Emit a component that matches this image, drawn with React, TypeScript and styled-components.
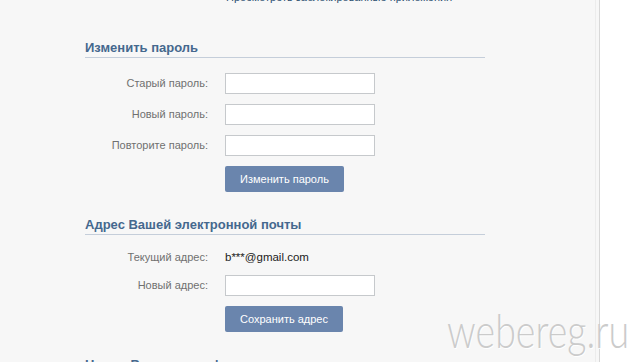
import React from "react";
import styled, { createGlobalStyle } from "styled-components";

const GlobalStyle = createGlobalStyle`
  html, body {
    margin: 0;
    padding: 0;
    height: 362px;
    overflow: hidden;
    background: #ffffff;
  }
  * { box-sizing: border-box; }
`;

const Page = styled.div`
  position: relative;
  display: flex;
  height: 362px;
  font-family: "Liberation Sans", Arial, sans-serif;
  font-size: 11px;
  color: #000;
`;

const Main = styled.main`
  width: 600px;
  flex-shrink: 0;
  background: #f7f7f7;
  border-right: 1px solid #d8d8d8;
  box-shadow: inset -3px 0 0 #f7f7f7, inset -4px 0 0 #ececec;
  padding-left: 85px;
  overflow: hidden;
`;

const Side = styled.aside`
  flex: 1;
  background: #ffffff;
`;

const Content = styled.div`
  width: 400px;
`;

const NoteRow = styled.div`
  display: flex;
  margin-top: -9px;
  line-height: 13px;
`;

const Spacer = styled.div`
  width: 140px;
  flex-shrink: 0;
`;

const NoteLink = styled.a`
  color: #2b4f70;
  text-decoration: none;
  padding-left: 1px;
`;

const Section = styled.section<{ $first?: boolean }>`
  margin-top: ${(p) => (p.$first ? "36px" : "25px")};
`;

const SectionTitle = styled.h2`
  margin: 0;
  font-size: 13px;
  font-weight: bold;
  line-height: 16px;
  color: #45688e;
  padding-bottom: 1px;
  border-bottom: 1px solid #c5ceda;
`;

const Fields = styled.div`
  display: flex;
  flex-direction: column;
  gap: 10px;
  margin-top: 15px;
`;

const Row = styled.div`
  display: flex;
  align-items: center;
  min-height: 15px;
`;

const Label = styled.label`
  width: 123px;
  margin-right: 17px;
  text-align: right;
  color: #707070;
  font-size: 11px;
  line-height: 15px;
  flex-shrink: 0;
`;

const Value = styled.span`
  font-size: 11.5px;
  line-height: 15px;
  color: #222;
`;

const Input = styled.input`
  width: 150px;
  height: 21px;
  margin: 0;
  padding: 2px 4px;
  border: 1px solid #c6c9cc;
  background: #ffffff;
  font-family: inherit;
  font-size: 11px;
  outline: none;
`;

const Button = styled.button`
  height: 26px;
  padding: 0 15px;
  margin: 0;
  border: none;
  border-radius: 2px;
  background: #6a85ad;
  color: #ffffff;
  font-family: "Liberation Sans", Arial, sans-serif;
  font-size: 11px;
  line-height: 26px;
  cursor: pointer;
`;

const Watermark = styled.div`
  position: absolute;
  left: 447px;
  top: 307px;
  font-family: Lato, "Open Sans", sans-serif;
  font-weight: 300;
  font-size: 47px;
  line-height: 46px;
  color: #cbcbcb;
  text-shadow: 1px 1px 0 #ffffff;
  white-space: nowrap;
  transform-origin: left top;
  transform: scaleX(0.8);
  pointer-events: none;
`;

type Field = { label: string; type?: string };

const passwordFields: Field[] = [
  { label: "Старый пароль:", type: "password" },
  { label: "Новый пароль:", type: "password" },
  { label: "Повторите пароль:", type: "password" },
];

export default function App() {
  return (
    <>
      <GlobalStyle />
      <Page>
        <Main>
          <Content>
            <NoteRow>
              <Spacer />
              <NoteLink href="#">Просмотреть заблокированные приложения</NoteLink>
            </NoteRow>

            <Section $first>
              <SectionTitle>Изменить пароль</SectionTitle>
              <Fields>
                {passwordFields.map((f) => (
                  <Row key={f.label}>
                    <Label>{f.label}</Label>
                    <Input type={f.type} />
                  </Row>
                ))}
                <Row>
                  <Spacer />
                  <Button>Изменить пароль</Button>
                </Row>
              </Fields>
            </Section>

            <Section>
              <SectionTitle>Адрес Вашей электронной почты</SectionTitle>
              <Fields>
                <Row>
                  <Label>Текущий адрес:</Label>
                  <Value>b***@gmail.com</Value>
                </Row>
                <Row>
                  <Label>Новый адрес:</Label>
                  <Input type="text" />
                </Row>
                <Row>
                  <Spacer />
                  <Button>Сохранить адрес</Button>
                </Row>
              </Fields>
            </Section>

            <Section>
              <SectionTitle>Номер Вашего телефона</SectionTitle>
            </Section>
          </Content>
        </Main>
        <Side />
        <Watermark>webereg.ru</Watermark>
      </Page>
    </>
  );
}
